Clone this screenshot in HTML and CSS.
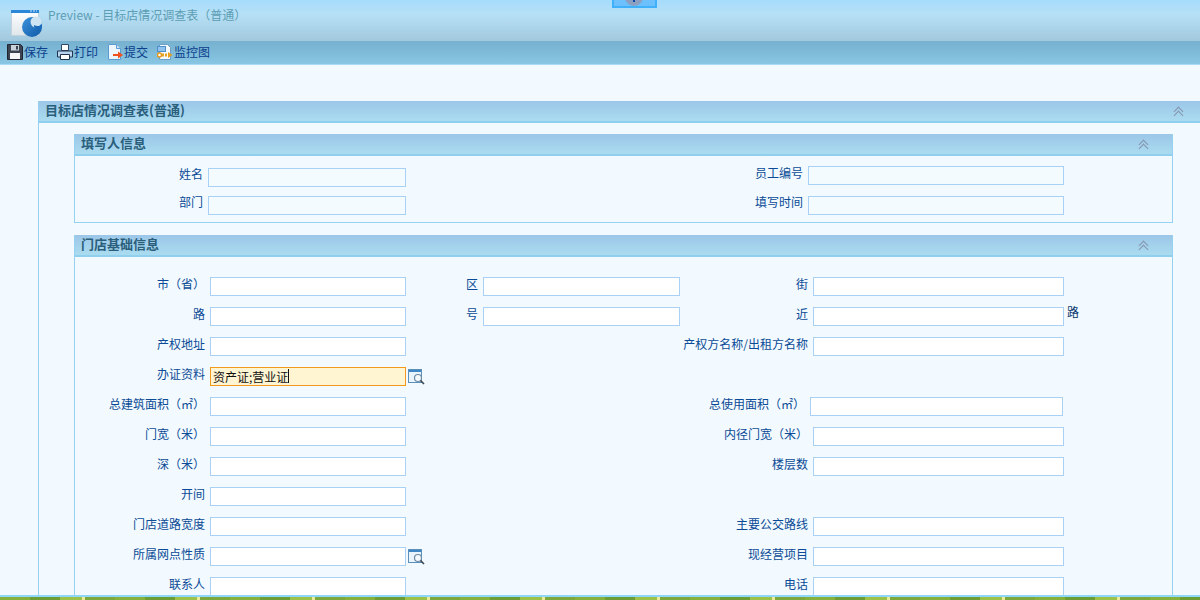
FILE: index.html
```html
<!DOCTYPE html>
<html lang="en">
<head>
    <meta charset="UTF-8">
    <title>Preview - 目标店情况调查表（普通）</title>
    <link rel="stylesheet" href="styles.css">
</head>
<body>
    <div class="top-tab"><span class="tab-knob"></span></div>

    <header class="title-bar">
        <svg class="logo" width="33" height="29" viewBox="0 0 33 29">
            <defs>
                <linearGradient id="pane" x1="0" y1="0" x2="0" y2="1"><stop offset="0" stop-color="#ffffff"/><stop offset="1" stop-color="#dfe6ea"/></linearGradient>
                <linearGradient id="swirl" x1="0" y1="0" x2="1" y2="1"><stop offset="0" stop-color="#3d92dc"/><stop offset="1" stop-color="#0f5aa8"/></linearGradient>
            </defs>
            <rect x="1.500" y="1.500" width="27" height="25" fill="url(#pane)" stroke="#c4d2dc"/>
            <rect x="1" y="1" width="28" height="3" fill="#2a86d8"/>
            <path d="M20 2h7" stroke="#cfe6f8" stroke-dasharray="2 1"/>
            <circle cx="22" cy="18" r="10" fill="url(#swirl)"/>
            <circle cx="26" cy="13" r="5.500" fill="#cfe4f2"/>
            <path d="M24 16c3 2 6 1 8-1v4c-3 2-6 1-8-1z" fill="#1b6cbc"/>
        </svg>
        <span class="window-title">Preview - 目标店情况调查表（普通）</span>
    </header>

    <nav class="toolbar">
        <a class="tool">
            <svg width="16" height="16" viewBox="0 0 16 16"><path d="M.5.5h13l2 2v13H.5z" fill="#3b4450" stroke="#1f2630"/><rect x="4" y="1" width="8" height="5.500" fill="#c9d3dc"/><rect x="9" y="2" width="2" height="3.500" fill="#3b4450"/><rect x="3" y="9" width="10" height="6" fill="#f5f7f9"/></svg>
            保存
        </a>
        <a class="tool">
            <svg width="16" height="16" viewBox="0 0 16 16"><path d="M4.500.5h7v6h-7z" fill="#fff" stroke="#2f4668"/><path d="M.5 7h15v6H.5z" fill="#b8d4ee" stroke="#22344f"/><path d="M3.500 10.500h9v5h-9z" fill="#fff" stroke="#22344f"/></svg>
            打印
        </a>
        <a class="tool">
            <svg width="16" height="16" viewBox="0 0 16 16"><path d="M1.500.5h8l4 4v11h-12z" fill="#eef6fd" stroke="#5d9bd3"/><path d="M9.500.5v4h4" fill="#cfe3f5" stroke="#5d9bd3"/><path d="M6 10h5V7.500l5 3.500-5 3.500V12H6z" fill="#f0501e"/></svg>
            提交
        </a>
        <a class="tool">
            <svg width="16" height="16" viewBox="0 0 16 16"><path d="M2.500.5h8l3 3v12h-11z" fill="#f3f9fe" stroke="#6f9fc9"/><rect x=".5" y="2.500" width="8" height="5" fill="#8fc2ec" stroke="#4f8fcb"/><circle cx="2.500" cy="11" r="2" fill="#fff" stroke="#e39a1c" stroke-width="1.500"/><path d="M5 11h6" stroke="#e8a020" stroke-width="3" stroke-dasharray="2 1"/><path d="M11 8l4.500 3-4.500 3z" fill="#e8a020"/></svg>
            监控图
        </a>
    </nav>

    <main class="content">
        <section class="panel panel-outer">
            <h2 class="panel-head">目标店情况调查表(普通)<span class="collapse"></span></h2>
            <div class="panel-body">

                <section class="panel">
                    <h3 class="panel-head">填写人信息<span class="collapse"></span></h3>
                    <div class="form-short">
                        <label class="lab">姓名</label><input class="field">
                        <label class="lab lab-up">员工编号</label><input class="field field-up">
                        <label class="lab">部门</label><input class="field">
                        <label class="lab">填写时间</label><input class="field">
                    </div>
                </section>

                <section class="panel">
                    <h3 class="panel-head">门店基础信息<span class="collapse"></span></h3>
                    <div class="form-main">
                        <label class="lab">市（省）</label><input class="field">
                        <label class="lab">区</label><input class="field">
                        <label class="lab">街</label><input class="field">

                        <label class="lab">路</label><input class="field">
                        <label class="lab">号</label><input class="field">
                        <label class="lab">近</label><div class="with-suffix"><input class="field"><span class="suffix">路</span></div>

                        <label class="lab">产权地址</label><input class="field">
                        <label class="lab span-mid">产权方名称/出租方名称</label><input class="field">

                        <label class="lab">办证资料</label>
                        <div class="with-picker">
                            <input class="field field-active" value="资产证;营业证">
                            <span class="caret"></span>
                            <svg class="picker" width="17" height="17" viewBox="0 0 17 17"><rect x=".5" y="1.500" width="13" height="13" fill="#eaf4fc" stroke="#5b8fbc"/><rect x="1" y="2" width="12" height="2" fill="#3f86c4"/><circle cx="10" cy="10" r="3.500" fill="#f4f9fd" stroke="#6d8aa3" stroke-width="1.200"/><path d="M12.500 12.500l3.500 3.500" stroke="#3c4650" stroke-width="1.600"/></svg>
                        </div>
                        <span class="blank-right"></span>

                        <label class="lab">总建筑面积（㎡）</label><input class="field">
                        <label class="lab span-mid lab-tight">总使用面积（㎡）</label><input class="field field-shift">

                        <label class="lab">门宽（米）</label><input class="field">
                        <label class="lab span-mid">内径门宽（米）</label><input class="field">

                        <label class="lab">深（米）</label><input class="field">
                        <label class="lab span-mid">楼层数</label><input class="field">

                        <label class="lab">开间</label><input class="field">
                        <span class="blank-right"></span>

                        <label class="lab">门店道路宽度</label><input class="field">
                        <label class="lab span-mid">主要公交路线</label><input class="field">

                        <label class="lab">所属网点性质</label>
                        <div class="with-picker">
                            <input class="field">
                            <svg class="picker" width="17" height="17" viewBox="0 0 17 17"><rect x=".5" y="1.500" width="13" height="13" fill="#eaf4fc" stroke="#5b8fbc"/><rect x="1" y="2" width="12" height="2" fill="#3f86c4"/><circle cx="10" cy="10" r="3.500" fill="#f4f9fd" stroke="#6d8aa3" stroke-width="1.200"/><path d="M12.500 12.500l3.500 3.500" stroke="#3c4650" stroke-width="1.600"/></svg>
                        </div>
                        <label class="lab span-mid">现经营项目</label><input class="field">

                        <label class="lab">联系人</label><input class="field">
                        <label class="lab span-mid">电话</label><input class="field">
                    </div>
                </section>

            </div>
        </section>
    </main>

    <footer class="grass"></footer>
</body>
</html>
```

FILE: styles.css
```css
html, body {
    margin: 0;
    height: 600px;
    overflow: hidden;
}
body {
    display: flex;
    flex-direction: column;
    font-family: "Noto Sans CJK SC", "Liberation Sans", sans-serif;
    font-size: 12px;
    color: #0b4a96;
    background: #f2faff;
}

/* top bars */
.top-tab {
    position: absolute;
    left: 612px;
    top: 0;
    width: 45px;
    height: 8px;
    box-sizing: border-box;
    background: #6cc0fb;
    border: 2px solid #3fb0fb;
    border-top: none;
    overflow: hidden;
}
.tab-knob {
    position: absolute;
    left: 11px;
    top: -12px;
    width: 18px;
    height: 18px;
    border-radius: 50%;
    background: #8c9fc0;
}
.tab-knob::after {
    content: "";
    position: absolute;
    left: 8px;
    top: 12px;
    width: 2px;
    height: 2px;
    background: #1446a8;
}
.title-bar {
    height: 41px;
    flex: none;
    display: flex;
    align-items: flex-start;
    box-sizing: border-box;
    padding: 9px 0 0 10px;
    background: linear-gradient(#a6dcfc, #b6e0f6 35%, #a2c8dd);
}
.window-title {
    margin: -1px 0 0 5px;
    color: #5c9db4;
    line-height: 14px;
}
.toolbar {
    height: 24px;
    flex: none;
    display: flex;
    align-items: center;
    box-sizing: border-box;
    padding: 0 0 2px 7px;
    gap: 9px;
    background: linear-gradient(#76b1cf, #88c6e4);
    border-bottom: 1px solid #a9dcf3;
}
.tool {
    display: flex;
    align-items: center;
    color: #0b3f8c;
}
.tool svg {
    margin-right: 1px;
}

/* panels */
.content {
    flex: 1;
    min-height: 0;
    overflow: hidden;
    padding: 36px 0 0 38px;
}
.panel {
    border: 1px solid #97d1f1;
    border-top: none;
    margin-bottom: 12px;
}
.panel-outer {
    width: 1161px;
    border-right: none;
    margin: 0;
}
.panel-body {
    padding: 11px 27px 0 35px;
}
.panel-head {
    position: relative;
    margin: 0;
    height: 22px;
    box-sizing: border-box;
    padding-left: 6px;
    font-size: 13px;
    font-weight: bold;
    line-height: 18px;
    color: #2a5f7c;
    background: linear-gradient(#9cc6e8, #aadcf0);
    border-bottom: 2px solid #90d0ee;
}
.collapse {
    position: absolute;
    right: 25px;
    top: 6px;
    width: 8px;
    height: 8px;
}
.panel-outer > .panel-head .collapse {
    right: 18px;
}
.collapse::before, .collapse::after {
    content: "";
    position: absolute;
    left: 1px;
    width: 6px;
    height: 6px;
    border-left: 1px solid #8494ac;
    border-top: 1px solid #8494ac;
    transform: rotate(45deg);
}
.collapse::before { top: 1px; }
.collapse::after { top: 5px; }

/* forms */
.form-short, .form-main {
    display: grid;
    align-items: center;
}
.form-short {
    grid-template-columns: 128px 198px 392px 256px;
    grid-auto-rows: 28px;
    column-gap: 5px;
    padding: 7px 0 3px;
}
.form-main {
    grid-template-columns: 135px 196px 77px 197px 133px 251px;
    grid-auto-rows: 30px;
    padding: 14px 0 0;
}
.lab {
    text-align: right;
    padding-right: 5px;
    margin-top: -4px;
    line-height: 14px;
}
.form-short .lab {
    padding-right: 0;
    margin-top: -7px;
}
.form-short .lab-up {
    margin-top: -8px;
}
.span-mid {
    grid-column: 3 / 6;
}
.form-main .lab-tight {
    padding-right: 8px;
}
.field {
    box-sizing: border-box;
    width: 100%;
    height: 19px;
    margin: 0;
    padding: 0 2px;
    border: 1px solid #a9d0f5;
    background: #fff;
    font: inherit;
    color: #111;
    outline: none;
}
.form-short .field {
    background: #f4fbff;
}
.form-short .field-up {
    margin-top: -4px;
}
.field-shift {
    width: 253px;
    margin-left: -3px;
}
.field-active {
    background: #fff5d2;
    border-color: #f39a1c;
}
.with-picker, .with-suffix {
    position: relative;
    display: flex;
}
.picker {
    position: absolute;
    left: 100%;
    top: 1px;
    margin-left: 2px;
}
.caret {
    position: absolute;
    left: 78px;
    top: 2px;
    width: 1px;
    height: 14px;
    background: #111;
}
.suffix {
    position: absolute;
    left: 100%;
    top: -2px;
    margin-left: 3px;
    line-height: 14px;
    color: #0a3a70;
}
.blank-right {
    grid-column: 3 / 7;
}
.grass {
    height: 5px;
    flex: none;
    box-sizing: border-box;
    border-top: 2px solid #8fd6fb;
    background: repeating-linear-gradient(90deg, #86b13c 0 30px, #6d9e36 30px 60px, #9dc24a 60px 82px, #ecec9c 82px 85px, #7da83c 85px 115px);
}
```
